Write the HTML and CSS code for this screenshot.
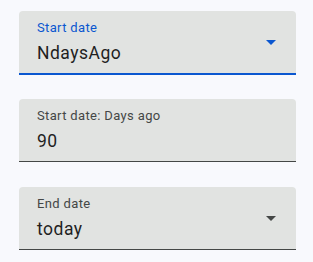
FILE: index.html
```html
<!DOCTYPE html>
<html lang="en">
<head>
    <meta charset="UTF-8">
    <meta name="viewport" content="width=device-width, initial-scale=1.0">
    <title>Date range</title>
    <link rel="stylesheet" href="styles.css">
</head>
<body>
    <div class="form">
        <div class="field field--select field--focused">
            <span class="field-label">Start date</span>
            <span class="field-value">NdaysAgo</span>
            <span class="field-arrow"></span>
        </div>

        <div class="field">
            <span class="field-label">Start date: Days ago</span>
            <span class="field-value">90</span>
        </div>

        <div class="field field--select">
            <span class="field-label">End date</span>
            <span class="field-value">today</span>
            <span class="field-arrow"></span>
        </div>
    </div>
</body>
</html>
```

FILE: styles.css
```css
* {
    margin: 0;
    padding: 0;
    box-sizing: border-box;
}

body {
    font-family: Roboto, 'Noto Sans', sans-serif;
    background: #f8f9fd;
    color: #1f1f1f;
    width: 313px;
    height: 262px;
    overflow: hidden;
}

.form {
    display: grid;
    grid-auto-rows: 88px;
    align-items: start;
    padding: 11px 17px 0 19px;
}

.field {
    position: relative;
    display: flex;
    flex-direction: column;
    height: 63px;
    padding: 10px 18px 0 18px;
    background: #e1e3e1;
    border-radius: 4px 4px 0 0;
    border-bottom: 1px solid #444746;
}

.field--focused {
    height: 64px;
    border-bottom: 2px solid #0b57d0;
}

.field-label {
    font-size: 13px;
    line-height: 14px;
    letter-spacing: 0.35px;
    color: #444746;
}

.field--focused .field-label {
    color: #0b57d0;
}

.field-value {
    margin-top: 7px;
    font-size: 17.5px;
    line-height: 22px;
    letter-spacing: 0.5px;
    color: #1f1f1f;
}

.field-arrow {
    position: absolute;
    top: 29px;
    right: 20px;
    width: 0;
    height: 0;
    border-left: 5px solid transparent;
    border-right: 5px solid transparent;
    border-top: 5px solid #444746;
}

.field--focused .field-arrow {
    border-top-color: #0b57d0;
}
```
